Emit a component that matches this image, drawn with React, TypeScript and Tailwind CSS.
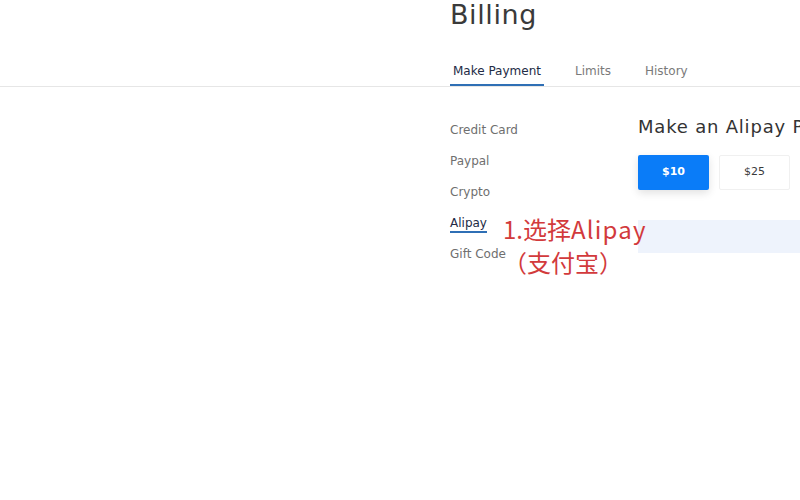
import React from "react";

const METHODS = ["Credit Card", "Paypal", "Crypto", "Alipay", "Gift Code"];
const AMOUNTS = ["$10", "$25", "$50", "$100"];

export default function App() {
  return (
    <div
      className="relative w-[800px] h-[500px] overflow-hidden bg-white"
      style={{ fontFamily: "'DejaVu Sans', 'Open Sans', sans-serif" }}
    >
      {/* Header */}
      <div className="pl-[450px]">
        <h1 className="h-[30px] text-[27px] leading-[30px] tracking-[0.6px] text-[#3a3a3a] font-normal">Billing</h1>
        <div className="mt-[33px] flex gap-[28px] text-[12px] leading-[16px]">
          <div className="px-[3px] pb-[5px] border-b-2 border-[#2f6fb5] text-[#222b45]">Make Payment</div>
          <div className="px-[3px] pb-[7px] text-[#7a7a7a]">Limits</div>
          <div className="px-[3px] pb-[7px] text-[#7a7a7a]">History</div>
        </div>
      </div>
      <div className="border-t border-[#e6e6e6]" />

      {/* Body */}
      <div className="flex items-start pl-[450px] pt-[29px]">
        <nav className="mt-[6px] w-[188px] shrink-0 flex flex-col gap-[15px] text-[12px] leading-[16px]">
          {METHODS.map((m) => (
            <div key={m} className="flex">
              <span
                className={
                  m === "Alipay"
                    ? "text-[#222b45] border-b-2 border-[#2f6fb5] -mb-[2px]"
                    : "text-[#6f6f6f]"
                }
              >
                {m}
              </span>
            </div>
          ))}
        </nav>
        <div className="flex-1 min-w-0">
          <h2 className="text-[18px] leading-[22px] tracking-[0.8px] text-[#333] whitespace-nowrap">
            Make an Alipay Payment
          </h2>
          <div className="mt-[17px] flex gap-[10px]">
            {AMOUNTS.map((a, i) => (
              <button
                key={a}
                className={
                  i === 0
                    ? "w-[71px] h-[35px] shrink-0 rounded-[2px] bg-[#0a7cf8] text-white text-[11px] font-bold shadow-[0_3px_8px_rgba(0,0,0,0.12)]"
                    : "w-[71px] h-[35px] shrink-0 rounded-[2px] bg-white border border-[#f0f0f0] text-[#3a3a3a] text-[11px]"
                }
              >
                {a}
              </button>
            ))}
          </div>
          <div className="mt-[30px] h-[33px] bg-[#eef3fc]" />
        </div>
      </div>

      {/* Annotation */}
      <div
        className="absolute left-[503px] top-[212px] text-[#d23a3c] text-[24px] leading-[33px]"
        style={{ fontFamily: "'Noto Sans CJK SC', sans-serif" }}
      >
        <div>
          1.选择<span className="tracking-[1.2px]">Alipay</span>
        </div>
        <div>（支付宝）</div>
      </div>
    </div>
  );
}
